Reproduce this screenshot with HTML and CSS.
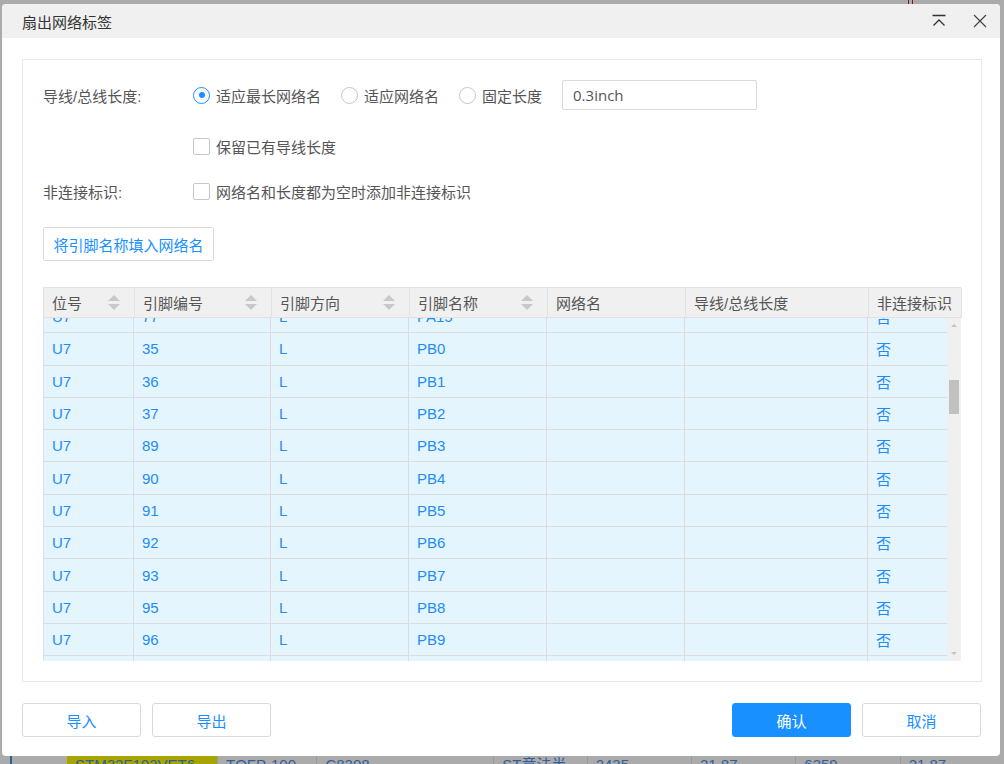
FILE: index.html
```html
<!DOCTYPE html>
<html lang="zh">
<head>
<meta charset="utf-8">
<title>扇出网络标签</title>
<link rel="stylesheet" href="styles.css">
</head>
<body>
<div class="backdrop">
  <div class="bg-mark"></div>
  <div class="bg-row">
    <span class="bg-bar"></span>
    <span class="bg-cell bg-yellow">STM32F103VET6</span>
    <span class="bg-cell w-tq">TQFP-100</span>
    <span class="bg-cell w-c">C8308</span>
    <span class="bg-cell w-st">ST意法半</span>
    <span class="bg-cell w-n">2435</span>
    <span class="bg-cell w-n">21.87</span>
    <span class="bg-cell w-n">6359</span>
    <span class="bg-cell w-n">21.87</span>
  </div>
</div>

<div class="dialog">
  <div class="dlg-head">
    <span class="dlg-title">扇出网络标签</span>
    <div class="dlg-tools">
      <svg class="tool" width="16" height="16" viewBox="0 0 16 16"><path d="M1.5 2.5h13M2.5 12.5l5.5-5.5 5.5 5.5" fill="none" stroke="#333" stroke-width="1.3"/></svg>
      <svg class="tool" width="16" height="16" viewBox="0 0 16 16"><path d="M2 2l12 12M14 2L2 14" fill="none" stroke="#444" stroke-width="1.2"/></svg>
    </div>
  </div>

  <div class="dlg-body">
    <div class="panel">
      <div class="form-row r1">
        <span class="lbl">导线/总线长度:</span>
        <div class="ctrls">
          <label class="opt"><span class="radio on"></span>适应最长网络名</label>
          <label class="opt"><span class="radio"></span>适应网络名</label>
          <label class="opt"><span class="radio"></span>固定长度</label>
          <div class="txt-input">0.3inch</div>
        </div>
      </div>
      <div class="form-row r2">
        <span class="lbl"></span>
        <label class="opt"><span class="check"></span>保留已有导线长度</label>
      </div>
      <div class="form-row r3">
        <span class="lbl">非连接标识:</span>
        <label class="opt"><span class="check"></span>网络名和长度都为空时添加非连接标识</label>
      </div>
      <div class="fill-btn">将引脚名称填入网络名</div>

      <div class="grid">
        <div class="g-head">
          <div class="th">位号<span class="sorter"></span></div>
          <div class="th">引脚编号<span class="sorter"></span></div>
          <div class="th">引脚方向<span class="sorter"></span></div>
          <div class="th">引脚名称<span class="sorter"></span></div>
          <div class="th">网络名</div>
          <div class="th">导线/总线长度</div>
          <div class="th last">非连接标识</div>
        </div>
        <div class="g-body">
          <div class="rows">
            <div class="rows-inner">
              <div class="tr"><div class="td">U7</div><div class="td">77</div><div class="td">L</div><div class="td">PA15</div><div class="td"></div><div class="td"></div><div class="td">否</div></div>
              <div class="tr"><div class="td">U7</div><div class="td">35</div><div class="td">L</div><div class="td">PB0</div><div class="td"></div><div class="td"></div><div class="td">否</div></div>
              <div class="tr"><div class="td">U7</div><div class="td">36</div><div class="td">L</div><div class="td">PB1</div><div class="td"></div><div class="td"></div><div class="td">否</div></div>
              <div class="tr"><div class="td">U7</div><div class="td">37</div><div class="td">L</div><div class="td">PB2</div><div class="td"></div><div class="td"></div><div class="td">否</div></div>
              <div class="tr"><div class="td">U7</div><div class="td">89</div><div class="td">L</div><div class="td">PB3</div><div class="td"></div><div class="td"></div><div class="td">否</div></div>
              <div class="tr"><div class="td">U7</div><div class="td">90</div><div class="td">L</div><div class="td">PB4</div><div class="td"></div><div class="td"></div><div class="td">否</div></div>
              <div class="tr"><div class="td">U7</div><div class="td">91</div><div class="td">L</div><div class="td">PB5</div><div class="td"></div><div class="td"></div><div class="td">否</div></div>
              <div class="tr"><div class="td">U7</div><div class="td">92</div><div class="td">L</div><div class="td">PB6</div><div class="td"></div><div class="td"></div><div class="td">否</div></div>
              <div class="tr"><div class="td">U7</div><div class="td">93</div><div class="td">L</div><div class="td">PB7</div><div class="td"></div><div class="td"></div><div class="td">否</div></div>
              <div class="tr"><div class="td">U7</div><div class="td">95</div><div class="td">L</div><div class="td">PB8</div><div class="td"></div><div class="td"></div><div class="td">否</div></div>
              <div class="tr"><div class="td">U7</div><div class="td">96</div><div class="td">L</div><div class="td">PB9</div><div class="td"></div><div class="td"></div><div class="td">否</div></div>
              <div class="tr"><div class="td">U7</div><div class="td">97</div><div class="td">L</div><div class="td">PB10</div><div class="td"></div><div class="td"></div><div class="td">否</div></div>
            </div>
          </div>
          <div class="vscroll">
            <span class="arr up"></span>
            <span class="thumb"></span>
            <span class="arr down"></span>
          </div>
        </div>
      </div>
    </div>

    <div class="dlg-foot">
      <div class="foot-group">
        <div class="btn">导入</div>
        <div class="btn">导出</div>
      </div>
      <div class="foot-group">
        <div class="btn primary">确认</div>
        <div class="btn">取消</div>
      </div>
    </div>
  </div>
</div>
</body>
</html>
```

FILE: styles.css
```css
* { box-sizing: border-box; }

html, body {
  margin: 0;
  padding: 0;
}

body {
  width: 1004px;
  height: 764px;
  overflow: hidden;
  position: relative;
  background: #ababab;
  font-family: "Liberation Sans", "Noto Sans CJK SC", sans-serif;
  font-size: 15px;
  color: #555;
}

/* ---------- backdrop (dimmed app behind the dialog) ---------- */
.backdrop {
  height: 764px;
  display: flex;
  flex-direction: column;
  justify-content: flex-end;
}

.bg-mark {
  position: absolute;
  left: 908px;
  top: 0;
  width: 5px;
  height: 5px;
  border-left: 1px solid #7a1a1a;
  border-right: 1px solid #7a1a1a;
}

.bg-row {
  height: 14px;
  display: flex;
  align-items: flex-start;
  font-size: 15px;
  line-height: 18px;
  color: #2f5f99;
  padding-top: 0;
  margin-bottom: -6px;
}

.bg-bar {
  width: 2px;
  height: 14px;
  margin-left: 10px;
  margin-right: 55px;
  background: #2f5f99;
}

.bg-cell {
  height: 18px;
  padding-left: 8px;
  border-left: 1px solid #9a9a9a;
}

.bg-yellow {
  width: 151px;
  background: #a8a400;
  color: #2f5f99;
  border-left: none;
}

.w-tq { width: 100px; }
.w-c { width: 178px; }
.w-st { width: 94px; }
.w-n { width: 105px; }

/* ---------- dialog ---------- */
.dialog {
  position: absolute;
  left: 2px;
  top: 4px;
  width: 998px;
  height: 752px;
  background: #fff;
  border-radius: 4px;
  overflow: hidden;
  display: flex;
  flex-direction: column;
}

.dlg-head {
  height: 34px;
  background: #f0f0f0;
  display: flex;
  align-items: center;
  justify-content: space-between;
  padding: 0 12px 0 20px;
}

.dlg-title {
  color: #333;
  font-size: 15px;
}

.dlg-tools {
  display: flex;
  gap: 25px;
  align-items: center;
}

.tool { display: block; }

.dlg-body {
  flex: 1;
  padding: 21px 18px 0 20px;
  display: flex;
  flex-direction: column;
}

.panel {
  height: 623px;
  border: 1px solid #e9e9e9;
  padding: 20px 20px 20px 20px;
  display: flex;
  flex-direction: column;
}

.form-row {
  height: 30px;
  display: flex;
  align-items: center;
}

.r2 { margin-top: 21px; }
.r3 { margin-top: 15px; }

.lbl {
  width: 150px;
  flex: none;
  color: #555;
}

.ctrls {
  display: flex;
  align-items: center;
  gap: 20px;
}

.opt {
  display: flex;
  align-items: center;
  gap: 6px;
  color: #555;
  white-space: nowrap;
}

.radio {
  width: 17px;
  height: 17px;
  border-radius: 50%;
  border: 1px solid #c6c6c6;
  background: #fff;
  display: flex;
  align-items: center;
  justify-content: center;
}

.radio.on {
  border-color: #1890ff;
}

.radio.on::after {
  content: "";
  width: 6px;
  height: 6px;
  border-radius: 50%;
  background: #1890ff;
}

.check {
  width: 17px;
  height: 17px;
  border: 1px solid #c6c6c6;
  border-radius: 2px;
  background: #fff;
}

.txt-input {
  width: 195px;
  height: 30px;
  border: 1px solid #d9d9d9;
  border-radius: 2px;
  padding-left: 10px;
  display: flex;
  align-items: center;
  font-family: "Open Sans", "Noto Sans", sans-serif;
  font-size: 15px;
  color: #555;
}

.fill-btn {
  margin-top: 21px;
  width: 171px;
  height: 34px;
  border: 1px solid #d9d9d9;
  border-radius: 2px;
  display: flex;
  align-items: center;
  justify-content: center;
  color: #1890ff;
}

/* ---------- grid ---------- */
.grid {
  margin-top: 26px;
  width: 918px;
}

.g-head {
  display: grid;
  grid-template-columns: 91px 137px 138px 138px 138px 183px 93px;
  height: 31px;
  background: #f0f0f0;
  border-top: 1px solid #e2e2e2;
  border-left: 1px solid #e2e2e2;
}

.th {
  position: relative;
  padding-left: 8px;
  display: flex;
  align-items: center;
  color: #555;
  border-right: 1px solid #e2e2e2;
  border-bottom: 1px solid #e2e2e2;
  white-space: nowrap;
}

.th.last { padding-left: 8px; }

.sorter {
  position: absolute;
  right: 14px;
  top: 7px;
  width: 12px;
  height: 15px;
}

.sorter::before,
.sorter::after {
  content: "";
  position: absolute;
  left: 0;
  border-left: 6px solid transparent;
  border-right: 6px solid transparent;
}

.sorter::before {
  top: 0;
  border-bottom: 6px solid #c8c8c8;
}

.sorter::after {
  bottom: 0;
  border-top: 6px solid #c8c8c8;
}

.g-body {
  display: flex;
  height: 343px;
}

.rows {
  width: 904px;
  height: 343px;
  overflow: hidden;
  background: #e5f5fd;
}

.rows-inner {
  margin-top: -17px;
}

.tr {
  display: grid;
  grid-template-columns: 91px 137px 138px 138px 138px 183px 79px;
  height: 32.3px;
  border-bottom: 1px solid #dcdcdc;
}

.td {
  padding-left: 8px;
  display: flex;
  align-items: center;
  color: #1e8cf5;
  border-right: 1px solid #dcdcdc;
  white-space: nowrap;
}

.td:first-child { border-left: 1px solid #e2e2e2; }
.td:last-child { border-right: none; }

.vscroll {
  width: 14px;
  height: 343px;
  background: #f0f0f0;
  position: relative;
}

.arr {
  position: absolute;
  left: 4px;
  border-left: 3px solid transparent;
  border-right: 3px solid transparent;
}

.arr.up {
  top: 6px;
  border-bottom: 3px solid #c4c4c4;
}

.arr.down {
  bottom: 6px;
  border-top: 3px solid #c4c4c4;
}

.thumb {
  position: absolute;
  left: 2px;
  top: 62px;
  width: 10px;
  height: 34px;
  background: #c1c1c1;
}

/* ---------- footer ---------- */
.dlg-foot {
  margin-top: 21px;
  display: flex;
  justify-content: space-between;
  padding-right: 1px;
}

.foot-group {
  display: flex;
  gap: 11px;
}

.btn {
  width: 119px;
  height: 34px;
  border: 1px solid #d9d9d9;
  border-radius: 3px;
  display: flex;
  align-items: center;
  justify-content: center;
  color: #1890ff;
  background: #fff;
}

.btn.primary {
  background: #1890ff;
  border-color: #1890ff;
  color: #fff;
}
```
